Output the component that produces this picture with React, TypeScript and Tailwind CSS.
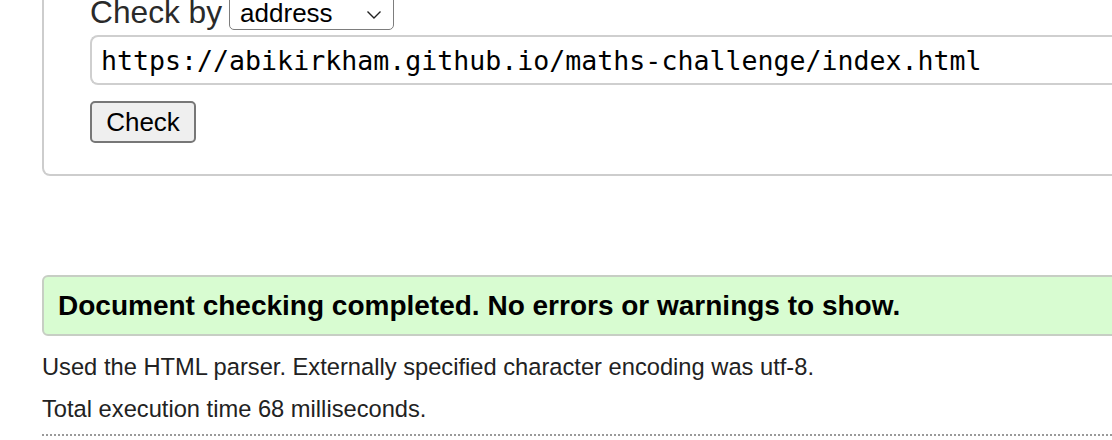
import React from "react";

const sans = { fontFamily: '"Liberation Sans", Arial, sans-serif' };

const App: React.FC = () => {
  return (
    <div className="h-[440px] w-full overflow-hidden bg-white font-['Liberation_Sans',Arial,sans-serif] text-[#222]">
      <div className="w-[1240px] pl-[42px]">
        {/* form fieldset, top is scrolled out of view */}
        <div className="-mt-[5px] rounded-b-[8px] border-x-2 border-b-2 border-[#cdcdcd] pb-[31px] pl-[46px]">
          <div className="flex h-[35px] items-center">
            <span className="text-[31.7px] leading-[35px] text-[#2a2a2a]">Check by</span>
            <div className="ml-[7px] flex h-[35px] w-[165px] items-center justify-between rounded-[5px] border-[1.5px] border-[#7d7d7d] pl-[10px] pr-[10px]">
              <span className="text-[26px] leading-none text-black">address</span>
              <svg width="16" height="10" viewBox="0 0 16 10" className="mr-[1px] mt-[4px]">
                <polyline points="1.5,1.5 8,8 14.5,1.5" fill="none" stroke="#222" strokeWidth="1.4" />
              </svg>
            </div>
          </div>

          <div className="mt-[5px] flex h-[50px] w-[1120px] items-center rounded-l-[8px] border-2 border-r-0 border-[#cfcfcf] pl-[9px] pt-[3px]">
            <span className="font-['DejaVu_Sans_Mono',monospace] text-[26.6px] leading-none text-black">
              https://abikirkham.github.io/maths-challenge/index.html
            </span>
          </div>

          <button
            style={sans}
            className="mt-[16px] flex h-[42px] w-[106px] items-center justify-center rounded-[5px] border-2 border-[#777] bg-[#efefef] text-[26px] leading-none text-black"
          >
            Check
          </button>
        </div>

        {/* result */}
        <div className="mt-[99px] flex h-[61px] items-center rounded-[6px] border-2 border-[#c7cec4] bg-[#d8fcd1] pl-[14px]">
          <span className="text-[28px] font-bold leading-none text-black">
            Document checking completed. No errors or warnings to show.
          </span>
        </div>

        <p className="mt-[10px] text-[23.7px] leading-[42px]">
          Used the HTML parser. Externally specified character encoding was utf-8.
        </p>
        <p className="text-[23.7px] leading-[42px]">Total execution time 68 milliseconds.</p>
        <div className="mt-[4px] border-t-2 border-dotted border-[#9a9a9a]" />
      </div>
    </div>
  );
};

export default App;
